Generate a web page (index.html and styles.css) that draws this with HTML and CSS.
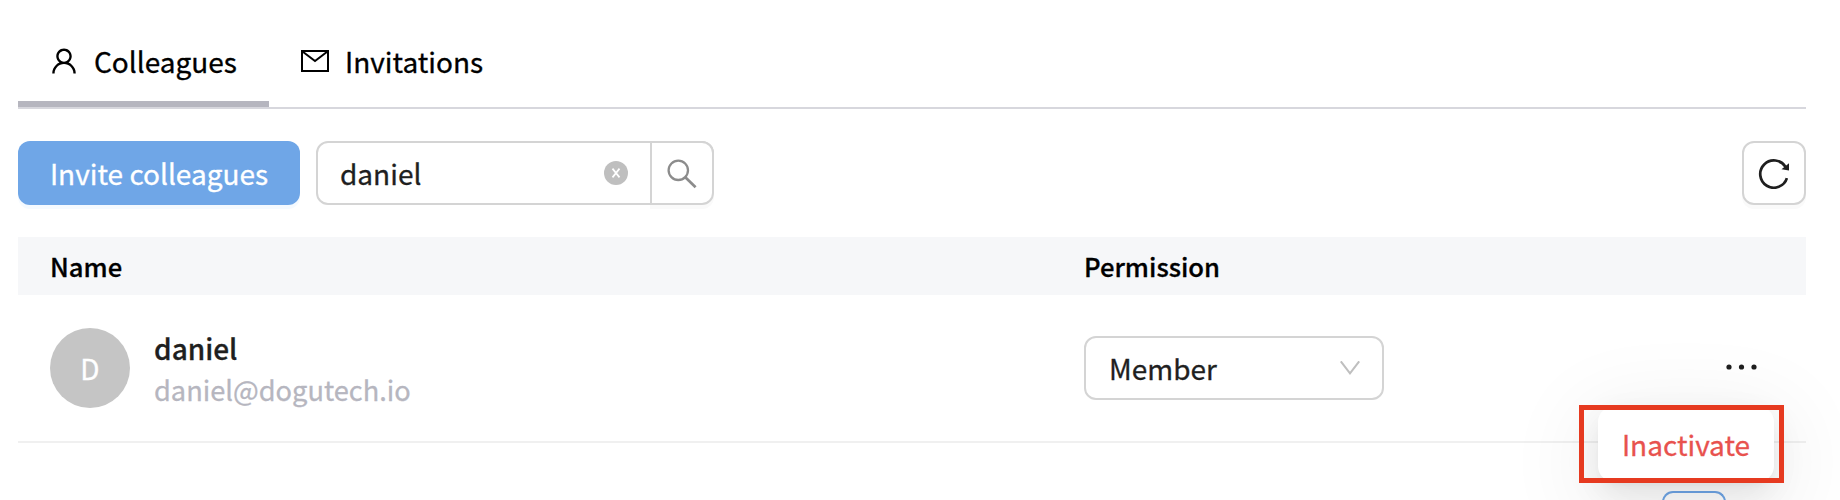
FILE: index.html
```html
<!DOCTYPE html>
<html lang="en">
<head>
<meta charset="utf-8">
<title>Colleagues</title>
<link rel="stylesheet" href="styles.css">
</head>
<body>
<main class="page">
  <nav class="tabs">
    <a class="tab tab-active">
      <svg class="icon-user" width="32" height="32" viewBox="0 0 1024 1024"><path d="M858.5 763.6a374 374 0 00-80.6-119.5 375.63 375.63 0 00-119.5-80.6c-.4-.2-.8-.3-1.2-.5C719.5 518 760 444.7 760 362c0-137-111-248-248-248S264 225 264 362c0 82.700 40.500 156 102.800 201.100-.4.2-.8.3-1.200.5-44.800 18.900-85 46-119.500 80.600a375.630 375.630 0 00-80.600 119.500A371.700 371.700 0 00136 901.800a8 8 0 008 8.200h60c4.400 0 7.900-3.500 8-7.800 2-77.200 33-149.500 87.800-204.300 56.700-56.700 132-87.900 212.200-87.900s155.500 31.200 212.200 87.900C779 752.700 810 825 812 902.200c.1 4.400 3.600 7.800 8 7.800h60a8 8 0 008-8.200c-1-47.800-10.900-94.300-29.500-138.200zM512 534c-45.900 0-89.100-17.900-121.600-50.400S340 407.900 340 362c0-45.900 17.900-89.100 50.400-121.600S466.100 190 512 190s89.100 17.900 121.600 50.400S684 316.100 684 362c0 45.900-17.900 89.100-50.400 121.600S557.900 534 512 534z"/></svg>
      <span>Colleagues</span>
    </a>
    <a class="tab">
      <svg class="icon-mail" width="28" height="22" viewBox="0 0 28 22" fill="none" stroke="#000" stroke-width="2"><path d="M1 1h26v20H1z"/><path d="M1.500 1.500L14 11 26.500 1.500"/></svg>
      <span>Invitations</span>
    </a>
  </nav>
  <div class="toolbar">
    <button class="invite">Invite colleagues</button>
    <div class="search">
      <span class="search-text">daniel</span>
      <svg class="clear" width="24" height="24" viewBox="0 0 24 24"><circle cx="12" cy="12" r="12" fill="#bfbfbf"/><path d="M8.500 7.600L15.500 16.400M15.500 7.600L8.500 16.400" stroke="#fff" stroke-width="1.700"/></svg>
      <button class="search-button"><svg width="30" height="30" viewBox="0 0 30 30" fill="none" stroke="#8c8c8c" stroke-width="2.300"><circle cx="11.300" cy="11.300" r="9.700"/><path d="M18.300 18.300L28.600 28.300" stroke-width="2.700"/></svg></button>
    </div>
    <button class="refresh"><svg width="32" height="32" viewBox="0 0 32 32"><path d="M27.500 9.900A13.650 13.650 0 1 0 28.900 21.200" fill="none" stroke="#1f1f1f" stroke-width="2.700"/><path d="M31 6.200v7.400l-7.500-1.300z" fill="#1f1f1f"/></svg></button>
  </div>
  <section class="table">
    <div class="row head"><div>Name</div><div>Permission</div><div></div></div>
    <div class="row body">
      <div class="person">
        <div class="avatar">D</div>
        <div class="details"><div class="name">daniel</div><div class="mail">daniel@dogutech.io</div></div>
      </div>
      <div><div class="select"><span>Member</span><svg width="20" height="14" viewBox="0 0 20 14" fill="none" stroke="#bfbfbf" stroke-width="2"><path d="M.8.3L10 12.300 19.200.3"/></svg></div></div>
      <div class="menu-anchor">
        <svg class="dots" width="32" height="6" viewBox="0 0 32 6" fill="#1f1f1f"><circle cx="3" cy="3" r="2.600"/><circle cx="15.500" cy="3" r="2.600"/><circle cx="28" cy="3" r="2.600"/></svg>
        <div class="menu">Inactivate</div>
        <div class="highlight"></div>
      </div>
    </div>
  </section>
  <div class="pagination"><span class="page-number"></span></div>
</main>
</body>
</html>
```
FILE: styles.css
```css
* { box-sizing: border-box; }
body {
  margin: 0;
  background: #fff;
  color: #1f1f1f;
  font: 28px/44px "Noto Sans CJK KR", "Noto Sans CJK SC", sans-serif;
  -webkit-text-stroke: .3px;
}
button { font: inherit; padding: 0; }
svg { display: block; flex: none; }
.page { height: 500px; overflow: hidden; padding: 18px 34px 0 18px; }
.tabs { display: flex; height: 91px; border-bottom: 2px solid #d7d7dd; color: #000; }
.tab { display: flex; height: 89px; padding: 0 30px; align-items: flex-start; border-bottom: 6px solid transparent; }
.tab-active { width: 251px; border-color: #b6b6bf; }
.tab span { margin-top: 21px; white-space: nowrap; }
.icon-user { margin: 27px 14px 0 0; }
.icon-mail { margin: 32px 16px 0 2px; }
.toolbar { display: flex; margin-top: 32px; height: 64px; }
.invite { width: 282px; border: 0; border-radius: 12px; background: #6fa6e7; color: #fff; box-shadow: 0 4px 0 #f5faff; }
.search { display: flex; align-items: center; width: 398px; margin-left: 16px; border: 2px solid #d4d4d4; border-radius: 12px; padding-left: 22px; }
.search-text { flex: 1; }
.clear { margin-right: 22px; }
.search-button { display: flex; width: 64px; height: 64px; margin-right: -2px; padding: 16px 0 0 15px; border: 2px solid #d4d4d4; border-radius: 0 12px 12px 0; background: #fff; box-shadow: 0 4px 0 #fafafa; }
.refresh { display: flex; width: 64px; margin-left: auto; padding: 14px; border: 2px solid #d4d4d4; border-radius: 12px; background: #fff; box-shadow: 0 4px 0 #fafafa; }
.table { margin-top: 32px; }
.row { display: grid; grid-template-columns: 1034px 480px 1fr; padding-left: 32px; align-items: center; }
.head { height: 58px; background: #f6f7f9; color: #000; font-size: 25.6px; font-weight: 500; }
.body { height: 148px; border-bottom: 2px solid #f0f0f0; }
.person { display: flex; align-items: center; gap: 24px; }
.avatar { width: 80px; height: 80px; border-radius: 50%; background: #c5c5c5; color: #fff; text-align: center; line-height: 80px; }
.details { padding-top: 2px; line-height: 41px; }
.name { font-weight: 500; }
.mail { color: #b6b6bf; font-size: 27.2px; }
.select { display: flex; align-items: center; justify-content: space-between; width: 300px; height: 64px; padding: 0 22px 0 23px; border: 2px solid #d4d4d4; border-radius: 12px; }
.menu-anchor { position: relative; height: 80px; padding-top: 35.5px; }
.dots { margin-left: 162px; }
.menu { position: absolute; left: 34px; top: 78px; width: 176px; height: 76px; border-radius: 16px; background: #fff; color: #e8524e; text-align: center; line-height: 76px; box-shadow: 0 12px 32px rgba(0,0,0,.08), 0 6px 12px -8px rgba(0,0,0,.12), 0 18px 84px 20px rgba(0,0,0,.06); z-index: 1; }
.highlight { position: absolute; left: 15px; top: 77px; width: 205px; height: 78px; border: 5px solid #e63a20; z-index: 2; }
.pagination { display: flex; justify-content: flex-end; height: 59px; padding: 48px 80px 0 0; overflow: hidden; }
.page-number { height: 11px; width: 64px; border: 2px solid #6fa6e7; border-bottom: 0; border-radius: 12px 12px 0 0; }
```
